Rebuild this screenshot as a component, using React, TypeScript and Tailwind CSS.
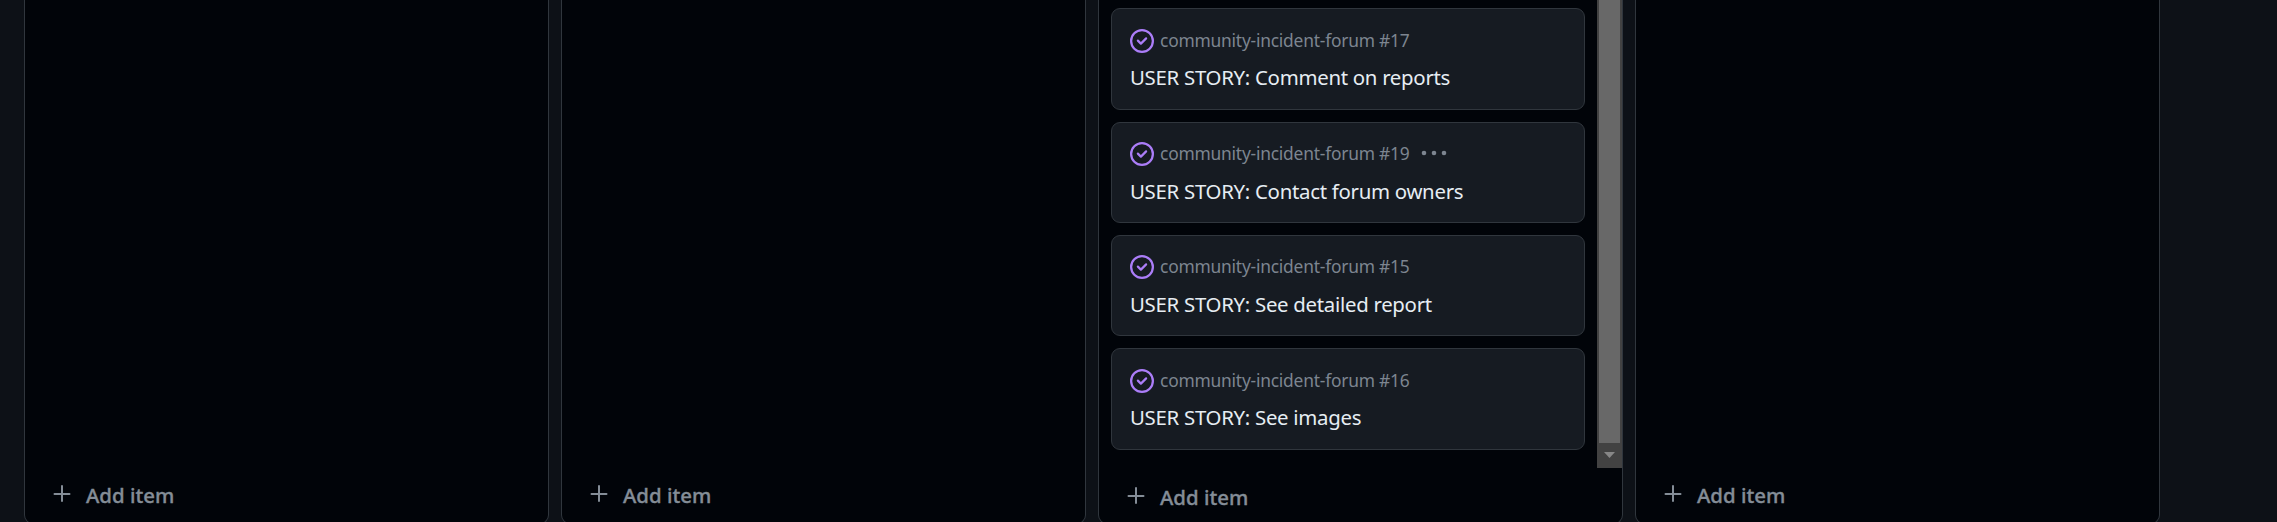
import React from "react";

type Story = { id: number; title: string; menu?: boolean; box: string; gap: string };

const stories: Story[] = [
  { id: 17, title: "Comment on reports", box: "h-[102px] mb-3 pt-5", gap: "mt-[9px]" },
  { id: 19, title: "Contact forum owners", menu: true, box: "h-[101px] mb-3 pt-[19px]", gap: "mt-[10px]" },
  { id: 15, title: "See detailed report", box: "h-[101px] mb-3 pt-[19px]", gap: "mt-[10px]" },
  { id: 16, title: "See images", box: "h-[102px] pt-5", gap: "mt-[9px]" },
];

function ClosedIcon() {
  return (
    <svg width="24" height="24" viewBox="0 0 16 16" fill="#ab7df8" className="shrink-0">
      <path d="M11.28 6.78a.75.75 0 0 0-1.06-1.06L7.25 8.69 5.78 7.22a.75.75 0 0 0-1.06 1.06l2 2a.75.75 0 0 0 1.06 0l3.5-3.5Z" />
      <path d="M16 8A8 8 0 1 1 0 8a8 8 0 0 1 16 0Zm-1.5 0a6.5 6.5 0 1 0-13 0 6.5 6.5 0 0 0 13 0Z" />
    </svg>
  );
}

function Card({ story }: { story: Story }) {
  return (
    <article className={`w-[474px] shrink-0 rounded-[9px] border border-[#30363d] bg-[#161b22] pl-[18px] ${story.box}`}>
      <div className="flex h-6 items-center">
        <ClosedIcon />
        <span className="ml-[6px] -mt-[3px] w-[251px] shrink-0 whitespace-nowrap text-[17.4px] leading-6 tracking-[-0.22px] text-[#7d8590]">
          community-incident-forum #{story.id}
        </span>
        {story.menu && (
          <svg width="26" height="8" viewBox="0 0 26 8" fill="#7d8590" className="ml-[10px] -mt-[3px]">
            <circle cx="3" cy="4" r="2.3" />
            <circle cx="13" cy="4" r="2.3" />
            <circle cx="23" cy="4" r="2.3" />
          </svg>
        )}
      </div>
      <h3 className={`whitespace-nowrap text-[20.4px] leading-[30px] tracking-[-0.29px] text-[#e6edf3] ${story.gap}`}>
        USER STORY: {story.title}
      </h3>
    </article>
  );
}

function AddItem({ low }: { low?: boolean }) {
  return (
    <button className={`flex items-center pl-[28px] text-[#848d97] ${low ? "mb-[11px]" : "mb-[13px]"}`}>
      <svg width="18" height="18" viewBox="0 0 18 18" stroke="#848d97" strokeWidth="2" strokeLinecap="round">
        <path d="M9 2v15M1.5 10h15" />
      </svg>
      <span className="ml-[15px] mt-1 text-[20.4px] font-medium leading-[30px] [-webkit-text-stroke:0.35px_#848d97]">
        Add item
      </span>
    </button>
  );
}

function Column({ children, low }: { children?: React.ReactNode; low?: boolean }) {
  return (
    <section className="flex h-[524px] w-[525px] shrink-0 flex-col justify-between rounded-b-[9px] border border-t-0 border-[#30363d] bg-[#010409]">
      {children ?? <div />}
      <AddItem low={low} />
    </section>
  );
}

export default function App() {
  return (
    <main className="flex h-[522px] gap-3 overflow-hidden bg-[#0d1117] pl-6 font-['Noto_Sans',sans-serif]">
      <Column />
      <Column />
      <Column low>
        <div className="flex h-[468px] justify-between">
          <div className="flex flex-col pl-3 pt-2">
            {stories.map((s) => (
              <Card key={s.id} story={s} />
            ))}
          </div>
          <div className="flex w-[25px] flex-col bg-[#424242] px-[2px]">
            <div className="h-[443px] bg-[#686868]" />
            <svg width="21" height="25" viewBox="0 0 21 25" fill="#878787">
              <path d="M5 9h11l-5.5 6z" />
            </svg>
          </div>
        </div>
      </Column>
      <Column />
    </main>
  );
}
